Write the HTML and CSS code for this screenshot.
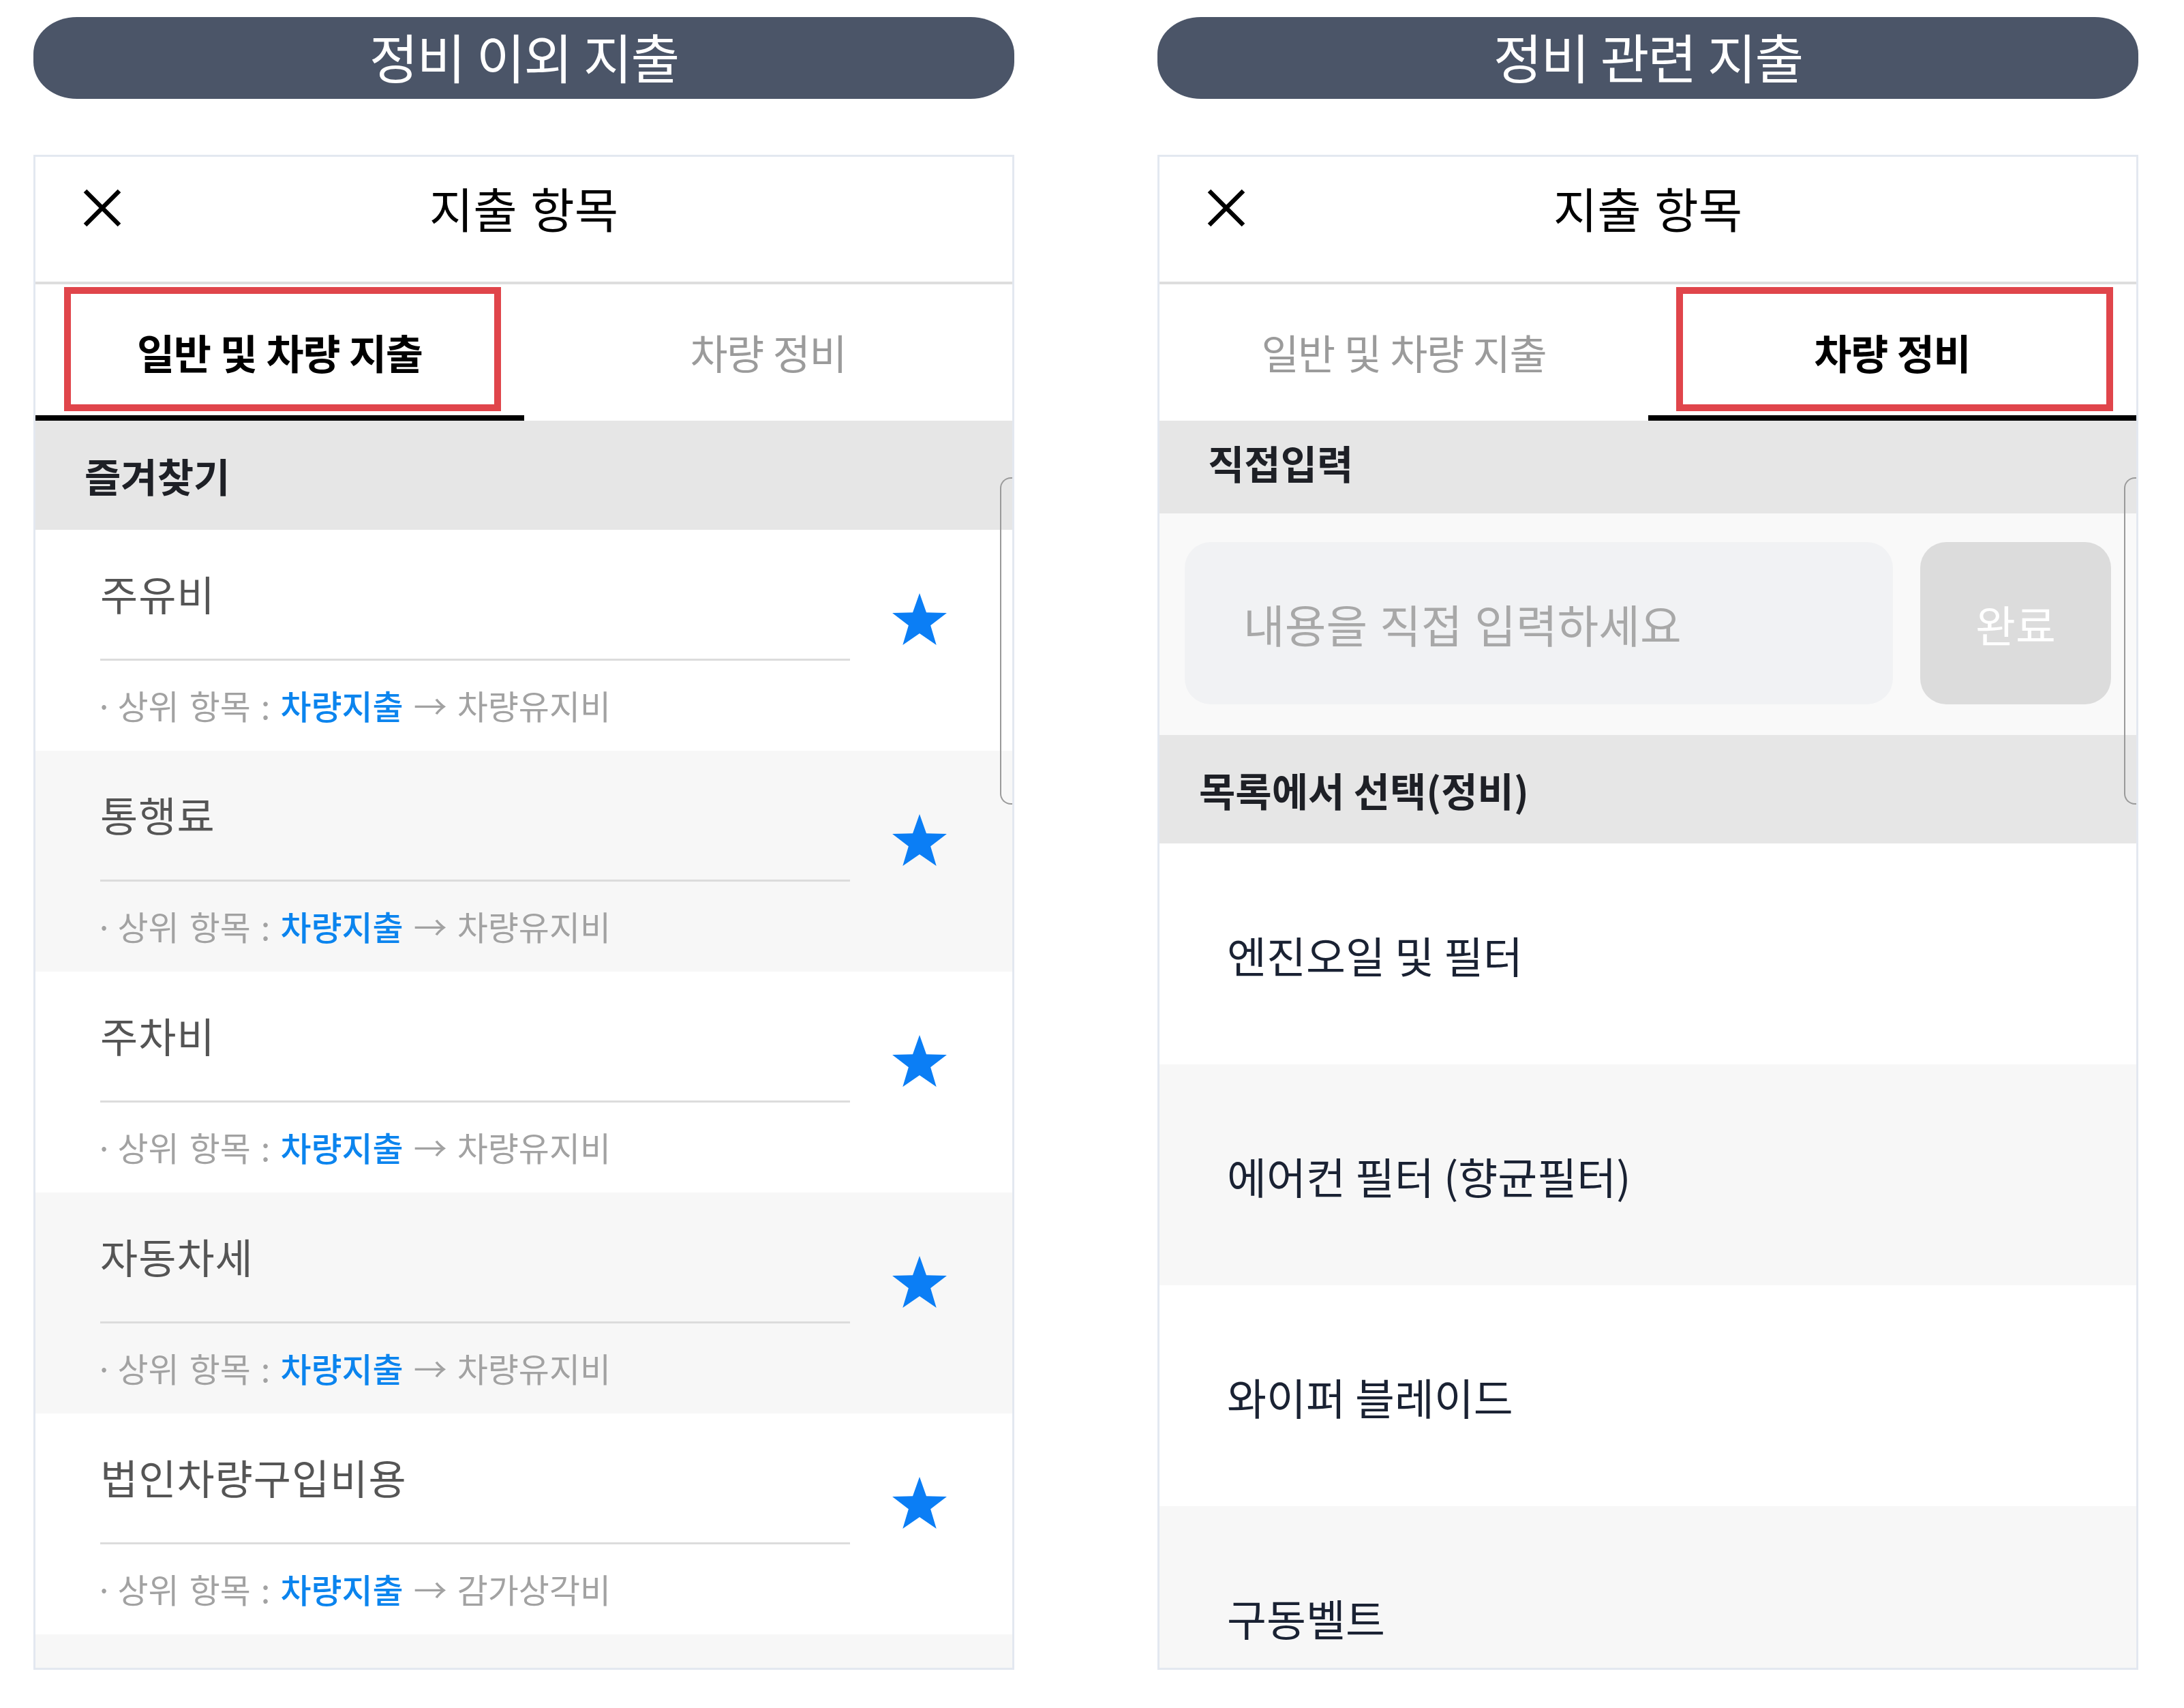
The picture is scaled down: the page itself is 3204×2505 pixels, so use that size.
FILE: index.html
```html
<html>
<head>
	<title>지출 항목</title>
	<link rel="stylesheet" href="styles.css">
</head>

<body>

<div class="page">

	<!-- 왼쪽: 정비 이외 지출 -->
	<section class="column">
		<div class="pill">정비 이외 지출</div>

		<div class="panel">
			<div class="topbar">
				<svg class="close" viewBox="0 0 56 56"><path d="M3 3 L53 53 M53 3 L3 53"/></svg>
				<div class="topbar-title">지출 항목</div>
				<span></span>
			</div>

			<div class="tabs">
				<div class="tab active">일반 및 차량 지출</div>
				<div class="tab">차량 정비</div>
			</div>

			<div class="section-head fav-head">즐겨찾기</div>

			<div class="fav-list">
				<div class="fav-item">
					<div class="fav-info">
						<div class="fav-name">주유비</div>
						<div class="fav-line"></div>
						<div class="fav-parent"><span class="dot">·</span>상위 항목 : <b>차량지출</b> → 차량유지비</div>
					</div>
					<svg class="star" viewBox="0 0 80 76"><polygon points="40,0 49.99,28.25 79.94,29.02 56.17,47.25 64.69,75.98 40,59 15.31,75.98 23.83,47.25 0.06,29.02 30.01,28.25"/></svg>
				</div>
				<div class="fav-item">
					<div class="fav-info">
						<div class="fav-name">통행료</div>
						<div class="fav-line"></div>
						<div class="fav-parent"><span class="dot">·</span>상위 항목 : <b>차량지출</b> → 차량유지비</div>
					</div>
					<svg class="star" viewBox="0 0 80 76"><polygon points="40,0 49.99,28.25 79.94,29.02 56.17,47.25 64.69,75.98 40,59 15.31,75.98 23.83,47.25 0.06,29.02 30.01,28.25"/></svg>
				</div>
				<div class="fav-item">
					<div class="fav-info">
						<div class="fav-name">주차비</div>
						<div class="fav-line"></div>
						<div class="fav-parent"><span class="dot">·</span>상위 항목 : <b>차량지출</b> → 차량유지비</div>
					</div>
					<svg class="star" viewBox="0 0 80 76"><polygon points="40,0 49.99,28.25 79.94,29.02 56.17,47.25 64.69,75.98 40,59 15.31,75.98 23.83,47.25 0.06,29.02 30.01,28.25"/></svg>
				</div>
				<div class="fav-item">
					<div class="fav-info">
						<div class="fav-name">자동차세</div>
						<div class="fav-line"></div>
						<div class="fav-parent"><span class="dot">·</span>상위 항목 : <b>차량지출</b> → 차량유지비</div>
					</div>
					<svg class="star" viewBox="0 0 80 76"><polygon points="40,0 49.99,28.25 79.94,29.02 56.17,47.25 64.69,75.98 40,59 15.31,75.98 23.83,47.25 0.06,29.02 30.01,28.25"/></svg>
				</div>
				<div class="fav-item">
					<div class="fav-info">
						<div class="fav-name">법인차량구입비용</div>
						<div class="fav-line"></div>
						<div class="fav-parent"><span class="dot">·</span>상위 항목 : <b>차량지출</b> → 감가상각비</div>
					</div>
					<svg class="star" viewBox="0 0 80 76"><polygon points="40,0 49.99,28.25 79.94,29.02 56.17,47.25 64.69,75.98 40,59 15.31,75.98 23.83,47.25 0.06,29.02 30.01,28.25"/></svg>
				</div>
			</div>

			<div class="scroll-ind"></div>
			<div class="mark mark-left"></div>
		</div>
	</section>

	<!-- 오른쪽: 정비 관련 지출 -->
	<section class="column">
		<div class="pill">정비 관련 지출</div>

		<div class="panel">
			<div class="topbar">
				<svg class="close" viewBox="0 0 56 56"><path d="M3 3 L53 53 M53 3 L3 53"/></svg>
				<div class="topbar-title">지출 항목</div>
				<span></span>
			</div>

			<div class="tabs">
				<div class="tab">일반 및 차량 지출</div>
				<div class="tab active">차량 정비</div>
			</div>

			<div class="section-head direct-head">직접입력</div>

			<div class="direct">
				<div class="direct-input">내용을 직접 입력하세요</div>
				<div class="direct-btn">완료</div>
			</div>

			<div class="section-head pick-head">목록에서 선택(정비)</div>

			<div class="pick-list">
				<div class="pick-item">엔진오일 및 필터</div>
				<div class="pick-item">에어컨 필터 (향균필터)</div>
				<div class="pick-item">와이퍼 블레이드</div>
				<div class="pick-item">구동벨트</div>
			</div>

			<div class="scroll-ind"></div>
			<div class="mark mark-right"></div>
		</div>
	</section>

</div>

</body>
</html>
```

FILE: styles.css
```css
body {
	font-family: 'Noto Sans CJK KR', 'Noto Sans', sans-serif;
	margin: 0;
	padding: 0;
	background-color: #ffffff;
}

.page {
	display: flex;
	gap: 210px;
	padding: 25px 0 0 49px;
}

.column {
	width: 1439px;
}

.pill {
	height: 120px;
	line-height: 114px;
	background-color: #4b5568;
	border-radius: 64px / 54px;
	color: #ffffff;
	font-size: 78px;
	letter-spacing: -2px;
	word-spacing: 2px;
	text-align: center;
	margin-bottom: 82px;
}

.panel {
	position: relative;
	height: 2222px;
	box-sizing: border-box;
	border: 3px solid #e3e8f0;
	overflow: hidden;
	background-color: #f7f7f7;
}

/* top bar */

.topbar {
	display: grid;
	grid-template-columns: 1fr auto 1fr;
	align-items: center;
	align-content: start;
	height: 187px;
	box-sizing: border-box;
	padding-top: 35px;
	background-color: #ffffff;
	border-bottom: 4px solid #dedede;
}

.topbar .close {
	width: 56px;
	height: 56px;
	margin-left: 70px;
}

.topbar .close path {
	stroke: #000000;
	stroke-width: 6.5;
	fill: none;
}

.topbar-title {
	font-size: 70px;
	line-height: 80px;
	color: #000000;
	word-spacing: 4px;
}

/* tabs */

.tabs {
	display: flex;
	height: 200px;
	background-color: #ffffff;
}

.tab {
	flex: 1;
	display: flex;
	align-items: center;
	justify-content: center;
	padding-top: 4px;
	font-size: 60px;
	letter-spacing: -1.5px;
	word-spacing: 2px;
	color: #9b9b9b;
	border-bottom: 8px solid transparent;
}

.tab.active {
	color: #000000;
	font-weight: 700;
	border-bottom-color: #000000;
}

/* section headers */

.section-head {
	display: flex;
	align-items: center;
	background-color: #e6e6e6;
	font-size: 58px;
	font-weight: 700;
	color: #1e2026;
}

.fav-head {
	height: 160px;
	padding-left: 72px;
}

.direct-head {
	height: 136px;
	padding-left: 71px;
	padding-bottom: 14px;
	box-sizing: border-box;
}

.pick-head {
	height: 159px;
	padding-left: 58px;
}

/* favourites */

.fav-item {
	display: flex;
	align-items: flex-start;
	height: 324px;
	padding-left: 95px;
	box-sizing: border-box;
}

.fav-item:nth-child(odd) {
	background-color: #ffffff;
}

.fav-info {
	width: 1100px;
}

.fav-name {
	margin-top: 63px;
	font-size: 60px;
	line-height: 60px;
	color: #555555;
	letter-spacing: 1px;
}

.fav-line {
	margin-top: 66px;
	height: 3px;
	background-color: #dcdcdc;
}

.fav-parent {
	margin-top: 40px;
	font-size: 49px;
	line-height: 50px;
	color: #a2a2a2;
	word-spacing: 4px;
}

.fav-parent .dot {
	margin-left: -8px;
	margin-right: 6px;
}

.fav-parent b {
	color: #0b84ee;
	font-weight: 500;
}

.star {
	width: 80px;
	height: 76px;
	margin: 93px 0 0 62px;
}

.star polygon {
	fill: #0b7ef5;
}

/* direct input */

.direct {
	display: flex;
	gap: 40px;
	height: 325px;
	box-sizing: border-box;
	padding: 42px 37px 45px 37px;
	background-color: #f9f9f9;
}

.direct-input {
	flex: 1;
	display: flex;
	align-items: center;
	padding-left: 86px;
	border-radius: 38px;
	background-color: #f1f2f4;
	font-size: 66px;
	word-spacing: 3px;
	color: #a8a8a8;
}

.direct-btn {
	width: 280px;
	display: flex;
	align-items: center;
	justify-content: center;
	border-radius: 38px;
	background-color: #dcdcdc;
	font-size: 64px;
	color: #ffffff;
}

/* maintenance list */

.pick-item {
	display: flex;
	align-items: center;
	height: 324px;
	padding-left: 99px;
	font-size: 63px;
	color: #1a2233;
}

.pick-item:nth-child(odd) {
	background-color: #ffffff;
}

/* overlays */

.scroll-ind {
	position: absolute;
	top: 470px;
	right: 0;
	width: 16px;
	height: 476px;
	border: 2px solid #9a9a9a;
	border-right: none;
	border-radius: 16px 0 0 16px;
}

.mark {
	position: absolute;
	top: 191px;
	width: 641px;
	height: 182px;
	box-sizing: border-box;
	border: 10px solid #e0454b;
}

.mark-left {
	left: 42px;
}

.mark-right {
	left: 758px;
}
```
